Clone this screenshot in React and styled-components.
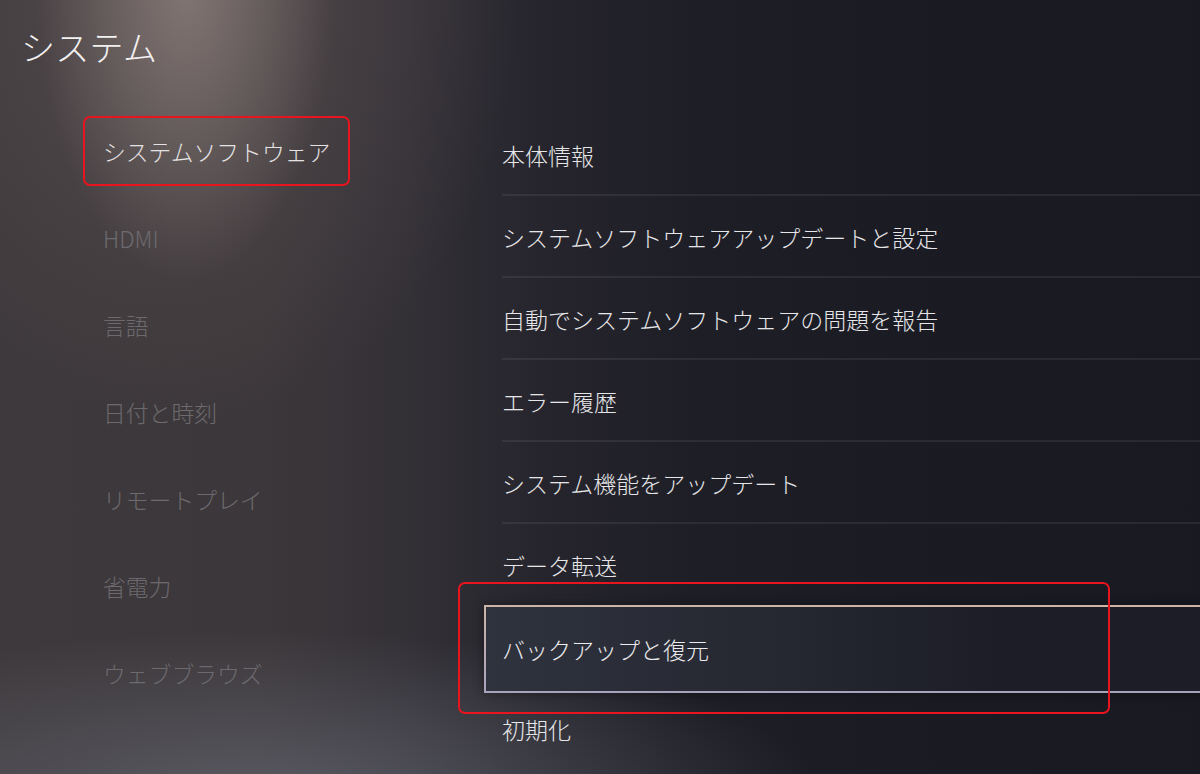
import React from 'react';
import styled, { createGlobalStyle } from 'styled-components';

const GlobalStyle = createGlobalStyle`
  html, body {
    margin: 0;
    padding: 0;
    background: #1b1b24;
  }
  * {
    box-sizing: border-box;
  }
`;

const FONT = `"Noto Sans CJK JP", "Noto Sans", sans-serif`;

const Screen = styled.div`
  position: relative;
  width: 1200px;
  height: 774px;
  overflow: hidden;
  font-family: ${FONT};
  font-weight: 300;
  background:
    radial-gradient(ellipse 150px 300px at 185px -20px, rgba(150, 136, 132, 0.7), rgba(150, 136, 132, 0) 100%),
    radial-gradient(ellipse 330px 420px at 190px 0px, rgba(110, 98, 98, 0.45), rgba(110, 98, 98, 0) 100%),
    radial-gradient(ellipse 560px 170px at 260px 800px, rgba(100, 102, 112, 0.75), rgba(100, 102, 112, 0) 100%),
    linear-gradient(to right, #3e393c 0%, #3c373a 22%, #333036 34%, #26252d 45%, #1e1e27 58%, #1b1b24 75%, #191922 100%);
`;

const Header = styled.header`
  height: 114px;
  padding: 24px 0 0 21px;
`;

const Title = styled.h1`
  margin: 0;
  font-family: ${FONT};
  font-weight: 300;
  font-size: 34px;
  line-height: 46px;
  color: #f2f0f0;
  letter-spacing: 0.3px;
`;

const Body = styled.div`
  display: grid;
  grid-template-columns: 484px 1fr;
`;

const Nav = styled.nav`
  display: flex;
  flex-direction: column;
  gap: 17px;
  padding: 2px 0 0 83px;
`;

const NavItem = styled.div`
  display: flex;
  align-items: center;
  height: 70px;
  width: 267px;
  padding-left: 18px;
  border-radius: 7px;
  border: 2px solid ${(p) => (p.$marked ? '#e8141e' : 'transparent')};
  font-size: 22.8px;
  color: ${(p) => (p.$active ? '#e4e2e2' : '#6c6a6e')};
  white-space: nowrap;
`;

const List = styled.div`
  position: relative;
  display: flex;
  flex-direction: column;
`;

const Row = styled.div`
  position: relative;
  display: flex;
  align-items: center;
  height: 82px;
  padding-left: 18px;
  font-size: 23px;
  color: #e6e6e8;
  white-space: nowrap;
  &::after {
    content: '';
    position: absolute;
    left: 18px;
    right: 0;
    bottom: 0;
    height: 2px;
    background: ${(p) => (p.$divider ? 'rgba(255, 255, 255, 0.07)' : 'transparent')};
  }
`;

const SelectedRow = styled.div`
  display: flex;
  align-items: center;
  height: 88px;
  margin: -1px -20px -5px 0;
  padding-left: 16px;
  font-size: 23px;
  color: #ececf0;
  border: 2px solid;
  border-image: linear-gradient(to bottom, #cdb4a6, #a8a3bd) 1;
  background: linear-gradient(to right, #2f333d 0%, #252731 40%, #1c1d27 70%, #1d1d27 100%);
  box-shadow: 0 0 10px rgba(0, 0, 0, 0.4);
  white-space: nowrap;
`;

const RedFrame = styled.div`
  position: absolute;
  left: -26px;
  top: 468px;
  width: 652px;
  height: 132px;
  border: 2.5px solid #e8141e;
  border-radius: 7px;
  pointer-events: none;
`;

const navItems = [
  'システムソフトウェア',
  'HDMI',
  '言語',
  '日付と時刻',
  'リモートプレイ',
  '省電力',
  'ウェブブラウズ',
];

const rows = [
  '本体情報',
  'システムソフトウェアアップデートと設定',
  '自動でシステムソフトウェアの問題を報告',
  'エラー履歴',
  'システム機能をアップデート',
  'データ転送',
];

const App = () => {
  return (
    <>
      <GlobalStyle />
      <Screen>
        <Header>
          <Title>システム</Title>
        </Header>
        <Body>
          <Nav>
            {navItems.map((item, i) => (
              <NavItem key={item} $active={i === 0} $marked={i === 0}>
                {item}
              </NavItem>
            ))}
          </Nav>
          <List>
            {rows.map((row, i) => (
              <Row key={row} $divider={i < rows.length - 1}>
                {row}
              </Row>
            ))}
            <SelectedRow>バックアップと復元</SelectedRow>
            <Row>初期化</Row>
            <RedFrame />
          </List>
        </Body>
      </Screen>
    </>
  );
};

export default App;
